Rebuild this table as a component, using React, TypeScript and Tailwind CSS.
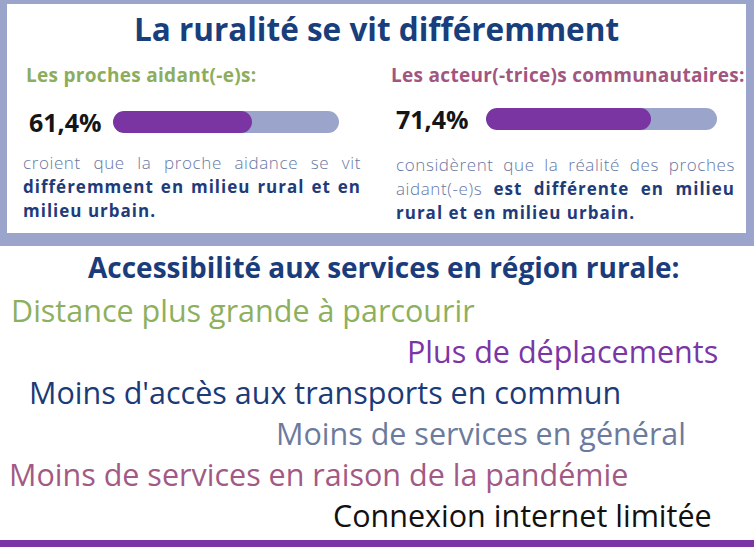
import React from "react";

const font = { fontFamily: '"Open Sans", "Noto Sans", sans-serif' };

function Bar({ pct, w }: { pct: number; w: string }) {
  return (
    <div className={`h-[22px] rounded-full bg-[#9ba5cb] overflow-hidden ${w}`}>
      <div className="h-full rounded-full bg-[#7a35a2]" style={{ width: `${pct}%` }} />
    </div>
  );
}

export default function App() {
  const items = [
    { t: "Distance plus grande à parcourir", c: "text-[#8db05e]", pl: "pl-[11px]" },
    { t: "Plus de déplacements", c: "text-[#7b36a6]", pl: "pl-[407px]" },
    { t: "Moins d'accès aux transports en commun", c: "text-[#1c3a77]", pl: "pl-[29px]" },
    { t: "Moins de services en général", c: "text-[#6c7b9d]", pl: "pl-[276px]" },
    { t: "Moins de services en raison de la pandémie", c: "text-[#a25a85]", pl: "pl-[9px]" },
    { t: "Connexion internet limitée", c: "text-[#111111]", pl: "pl-[333px]" },
  ];
  return (
    <div className="w-[754px] h-[547px] bg-white flex flex-col overflow-hidden" style={font}>
      <div className="bg-[#9ba5cb] pt-[4px] pl-[7px] pr-[8px] pb-[13px]">
        <div className="bg-white h-[229px] pt-[7px]">
          <h1 className="text-center text-[31.5px] leading-[36px] font-bold text-[#183e7c]">
            La ruralité se vit différemment
          </h1>
          <div className="flex pl-[16px] gap-[35px] mt-[16px]">
            <div className="w-[338px]">
              <div className="ml-[3px] text-[19px] leading-[24px] font-bold tracking-[0.3px] text-[#8cad5c]">
                Les proches aidant(-e)s:
              </div>
              <div className="flex items-center h-[24px] mt-[23px]">
                <div className="w-[90px] pl-[6px] text-[25px] leading-[24px] font-bold text-[#151515]">61,4%</div>
                <Bar pct={61.4} w="w-[226px]" />
              </div>
              <p className="mt-[17px] text-[17px] leading-[24px] text-justify font-light text-[#6677a3] tracking-[0.6px]">
                croient que la proche aidance se vit{" "}
                <span className="font-bold text-[#1e3b7a] tracking-[1px]">
                  différemment en milieu rural et en milieu urbain.
                </span>
              </p>
            </div>
            <div className="w-[339px]">
              <div className="-ml-[5px] whitespace-nowrap text-[19px] leading-[24px] font-bold tracking-[0.3px] text-[#a0567f]">
                Les acteur(-trice)s communautaires:
              </div>
              <div className="flex items-center h-[24px] mt-[20px]">
                <div className="w-[90px] text-[25px] leading-[24px] font-bold text-[#151515]">71,4%</div>
                <Bar pct={71.4} w="w-[231px]" />
              </div>
              <p className="mt-[22px] text-[17px] leading-[24px] text-justify font-light text-[#6677a3] tracking-[0.6px]">
                considèrent que la réalité des proches aidant(-e)s{" "}
                <span className="font-bold text-[#1e3b7a] tracking-[1px]">
                  est différente en milieu rural et en milieu urbain.
                </span>
              </p>
            </div>
          </div>
        </div>
      </div>
      <div className="flex-1 flex flex-col">
        <h2 className="mt-[5px] pl-[88px] text-[28px] leading-[32px] font-bold text-[#1b3c7b] whitespace-nowrap">
          Accessibilité aux services en région rurale:
        </h2>
        <div className="mt-[7px] flex flex-col">
          {items.map((it) => (
            <div key={it.t} className={`${it.pl} ${it.c} text-[30.5px] leading-[41px] whitespace-nowrap`}>
              {it.t}
            </div>
          ))}
        </div>
      </div>
      <div className="h-[7px] bg-[#7b36a6]" />
    </div>
  );
}
